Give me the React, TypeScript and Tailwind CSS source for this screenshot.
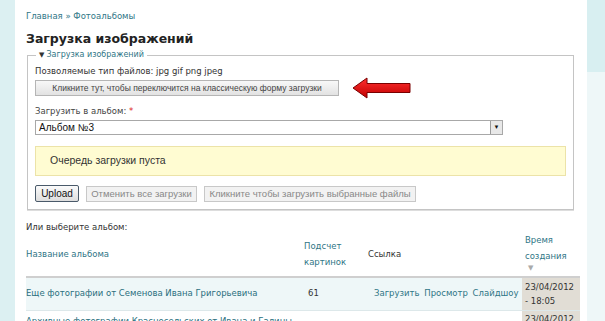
import React from 'react';

const font = { fontFamily: '"DejaVu Sans", Verdana, sans-serif' };
const btnFont = { fontFamily: '"Liberation Sans", Arial, sans-serif' };

const RedArrow: React.FC = () => (
  <svg width="60" height="22" viewBox="0 0 60 22" className="ml-[13px] -my-[3px]">
    <defs>
      <linearGradient id="rg" x1="0" y1="0" x2="0" y2="1">
        <stop offset="0" stopColor="#ff3030" />
        <stop offset="1" stopColor="#c00000" />
      </linearGradient>
    </defs>
    <polygon points="1,11 15,1 15,6.5 58,6.5 58,15.5 15,15.5 15,21" fill="url(#rg)" stroke="#7a0000" strokeWidth="1" />
  </svg>
);

const App: React.FC = () => {
  return (
    <div className="flex w-[605px] h-[321px] overflow-hidden bg-white text-[#333]" style={font}>
      {/* left strip */}
      <div className="w-[15px] shrink-0 bg-[#dcf0f2]" />

      <div className="w-[572px] shrink-0 pl-[11px] pr-[7px]">
        <div className="pt-[10px] text-[8.5px] leading-[12px] text-[#2f7686]">Главная » Фотоальбомы</div>
        <h1 className="mt-[9px] text-[12.5px] leading-[16px] font-bold text-[#222]">Загрузка изображений</h1>

        <fieldset className="mt-[2px] ml-[1px] mr-[6px] border border-[#c4c4c4] shadow-[0_1px_0_#ddd] px-[7px] pb-[7px]">
          <legend className="ml-[1px] px-[3px] text-[8px] leading-[12px] text-[#2f7686]">
            <span className="text-[#333] text-[7px] mr-[2px]">▼</span>Загрузка изображений
          </legend>
          <div className="mt-[4px] text-[8.5px] leading-[12px]">Позволяемые тип файлов: jpg gif png jpeg</div>
          <div className="mt-[3px] flex items-center">
            <button
              className="h-[16px] w-[304px] border border-[#b5b5b5] bg-gradient-to-b from-[#f8f8f8] to-[#e2e2e2] text-[8.5px] text-[#444] leading-[14px]"
              style={btnFont}
            >
              Кликните тут, чтобы переключится на классическую форму загрузки
            </button>
            <RedArrow />
          </div>
          <div className="mt-[9px] text-[8.5px] leading-[12px] text-[#444]">
            Загрузить в альбом: <span className="text-[#d22]">*</span>
          </div>
          <div className="mt-[3px] flex h-[15px] w-[468px] items-center border border-[#a8a8a8] bg-white pl-[3px]" style={btnFont}>
            <span className="flex-1 text-[10px] leading-[13px] text-[#111]">Альбом №3</span>
            <span className="flex h-[13px] w-[12px] items-center justify-center border-l border-[#9a9a9a] bg-[#e8e8e8] text-[6px] text-[#111]">▼</span>
          </div>
          <div
            className="mt-[11px] flex h-[30px] items-center border border-[#ece3a8] bg-[#fffcd2] pl-[14px] text-[10.5px] text-[#333]"
            style={btnFont}
          >
            Очередь загрузки пуста
          </div>
          <div className="mt-[9px] flex items-center gap-[7px]" style={btnFont}>
            <button className="h-[17px] w-[44px] rounded-[2px] border border-[#4a5a6a] bg-gradient-to-b from-[#fbfbfb] to-[#dedede] text-[10px] text-[#111] leading-[15px]">
              Upload
            </button>
            <button className="h-[16px] w-[111px] border border-[#c8c8c8] bg-[#f2f2f2] text-[9.5px] text-[#888] leading-[14px]">
              Отменить все загрузки
            </button>
            <button className="h-[16px] w-[212px] border border-[#c8c8c8] bg-[#f2f2f2] text-[9.5px] text-[#888] leading-[14px]">
              Кликните чтобы загрузить выбранные файлы
            </button>
          </div>
        </fieldset>

        <div className="mt-[12px] text-[8.5px] leading-[10px] text-[#333]">Или выберите альбом:</div>

        <table className="w-[554px] border-collapse text-[8.5px]">
          <thead>
            <tr className="border-b-2 border-[#cfcfcf] align-middle">
              <th className="w-[278px] p-0 text-left font-normal text-[#2f7686] leading-[16px]">Название альбома</th>
              <th className="w-[62px] p-0 text-left font-normal text-[#2f7686] leading-[16px]">Подсчет<br />картинок</th>
              <th className="w-[156px] p-0 pl-[2px] text-left font-normal text-[#333]">Ссылка</th>
              <th className="p-0 pl-[3px] text-left font-normal text-[#2f7686] leading-[16px]">
                Время<br />создания
                <div className="h-[12px] leading-[8px] text-[7px] text-[#aaa] pl-[3px]">▼</div>
              </th>
            </tr>
          </thead>
          <tbody>
            <tr className="h-[33px] border-b border-[#dde8ea] bg-[#eef7f8]">
              <td className="text-[#2a6f7e]">Еще фотографии от Семенова Ивана Григорьевича</td>
              <td className="pl-[4px] text-[#333]">61</td>
              <td className="pl-[8px] text-[#2f7686] whitespace-nowrap">
                <span>Загрузить</span> <span className="ml-[2px]">Просмотр</span> <span className="ml-[2px]">Слайдшоу</span>
              </td>
              <td className="bg-[#e1ddd5] pl-[3px] leading-[14px] text-[#333]">23/04/2012<br />- 18:05</td>
            </tr>
            <tr className="h-[33px]">
              <td className="align-top pt-[4px] text-[#2a6f7e] whitespace-nowrap">Архивные фотографии Красносельских от Ивана и Галины</td>
              <td />
              <td />
              <td className="align-top bg-[#e1ddd5] pt-[2px] pl-[3px] text-[#333]">23/04/2012</td>
            </tr>
          </tbody>
        </table>
      </div>

      {/* right strip */}
      <div className="w-[18px] shrink-0 flex flex-col">
        <div className="h-[72px] bg-[#d8eff1]" />
        <div className="flex-1 bg-[#eef7f8]" />
      </div>
    </div>
  );
};

export default App;
